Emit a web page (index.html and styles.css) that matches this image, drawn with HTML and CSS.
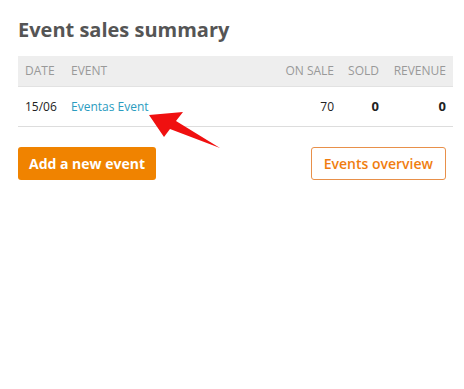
FILE: index.html
```html
<!DOCTYPE html>
<html lang="en">
<head>
    <meta charset="UTF-8">
    <title>Event sales summary</title>
    <link rel="stylesheet" href="styles.css">
</head>
<body>
    <div class="summary">
        <h1>Event sales summary</h1>
        <table class="sales">
            <colgroup>
                <col class="col-date">
                <col>
                <col class="col-onsale">
                <col class="col-sold">
                <col class="col-revenue">
            </colgroup>
            <thead>
                <tr>
                    <th>Date</th>
                    <th>Event</th>
                    <th class="num">On sale</th>
                    <th class="num">Sold</th>
                    <th class="num">Revenue</th>
                </tr>
            </thead>
            <tbody>
                <tr>
                    <td>15/06</td>
                    <td><a href="#">Eventas Event</a></td>
                    <td class="num">70</td>
                    <td class="num strong">0</td>
                    <td class="num strong">0</td>
                </tr>
            </tbody>
        </table>
        <div class="actions">
            <a class="btn btn-primary" href="#">Add a new event</a>
            <a class="btn btn-outline" href="#">Events overview</a>
        </div>

        <svg class="pointer" width="80" height="45" viewBox="145 110 80 45">
            <polygon fill="#f01010" points="149,115 183,112 176,121 220,148 170,129 164,137"/>
        </svg>
    </div>
</body>
</html>
```

FILE: styles.css
```css
* {
    margin: 0;
    padding: 0;
    box-sizing: border-box;
}

body {
    font-family: 'Open Sans', sans-serif;
    background: #ffffff;
    color: #222;
}

.summary {
    position: relative;
    padding: 16px 11px 0 18px;
}

h1 {
    font-size: 20px;
    font-weight: 700;
    color: #555;
    line-height: 27px;
    margin-bottom: 13px;
}

.sales {
    width: 100%;
    border-collapse: collapse;
    table-layout: fixed;
    font-size: 12px;
}

.col-date { width: 46px; }
.col-onsale { width: 70px; }
.col-sold { width: 45px; }
.col-revenue { width: 67px; }

.sales th {
    background: #eeeeee;
    color: #999;
    font-weight: 400;
    text-transform: uppercase;
    text-align: left;
    height: 30px;
    padding: 0 7px;
    white-space: nowrap;
    border-bottom: 1px solid #e2e2e2;
}

.sales td {
    height: 40px;
    padding: 0 7px;
    border-bottom: 1px solid #dddddd;
}

.sales .num {
    text-align: right;
}

.sales .strong {
    font-weight: 700;
    font-size: 13px;
}

.sales a {
    color: #2a9cc0;
    text-decoration: none;
}

.actions {
    display: flex;
    justify-content: space-between;
    padding: 20px 7px 0 0;
}

.btn {
    display: inline-flex;
    align-items: center;
    height: 33px;
    padding: 0 11px;
    border-radius: 3px;
    font-size: 14px;
    text-decoration: none;
}

.btn-primary {
    background: #f08300;
    color: #fff;
    font-weight: 700;
}

.btn-outline {
    border: 1px solid #e8904a;
    color: #f07d10;
    font-weight: 600;
    padding: 0 12px;
}

.pointer {
    position: absolute;
    left: 145px;
    top: 110px;
}
```
